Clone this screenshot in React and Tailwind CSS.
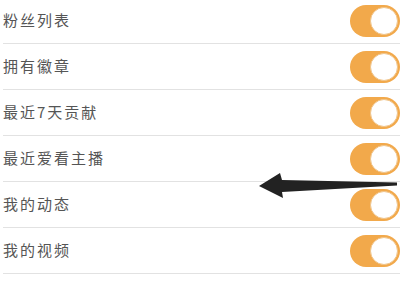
const items = ["粉丝列表", "拥有徽章", "最近7天贡献", "最近爱看主播", "我的动态", "我的视频"];

const Toggle = () => (
  <div className="w-[50px] h-[32px] rounded-full bg-[#f2a94b] flex items-center justify-end pr-[2px]">
    <div className="w-[28px] h-[28px] rounded-full bg-white border border-[#f0c48a]" />
  </div>
);

export default function App() {
  return (
    <div className="relative w-[400px] h-[300px] overflow-hidden bg-white" style={{ fontFamily: '"Noto Sans CJK SC", "Noto Sans", sans-serif' }}>
      <div className="-mt-[2px]">
        {items.map((label) => (
          <div key={label} className="h-[46px] flex items-center justify-between border-b border-[#e2e2e2] ml-[3px]">
            <span className="text-[15px] tracking-[2px] text-[#555555]">{label}</span>
            <Toggle />
          </div>
        ))}
      </div>
      <svg className="absolute left-0 top-0 pointer-events-none" width="400" height="300" viewBox="0 0 400 300">
        <polygon
          points="259,186 280,173 282,180 397,182.5 397,185.5 282,192 283,198"
          fill="#222222"
        />
      </svg>
    </div>
  );
}
